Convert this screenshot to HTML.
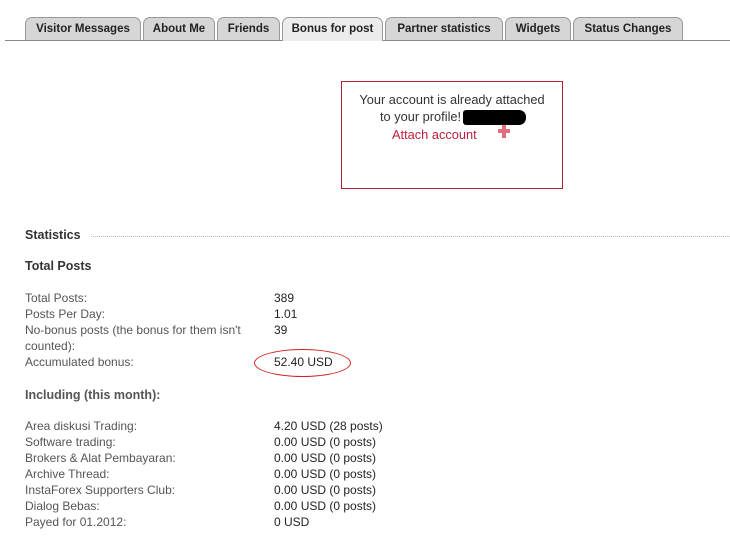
<!DOCTYPE html>
<html><head><meta charset="utf-8"><style>
body{margin:0;width:730px;height:556px;background:#fff;font-family:"Liberation Sans",sans-serif;font-size:12px;color:#333;position:relative;overflow:hidden}
.a{position:absolute;white-space:nowrap;line-height:16px}
.tab{position:absolute;top:17px;height:23px;box-sizing:border-box;border:1px solid #999;border-bottom:none;border-radius:7px 7px 0 0;background:#d6d6d6;font-weight:bold;font-size:11.5px;color:#222;text-align:center;line-height:23px}
.tab.on{background:#ececec;height:24px}
.l{color:#555}
.v{color:#222}
.b{font-size:12.8px}
</style></head><body>
<div style="position:absolute;left:5px;top:40px;width:725px;border-top:1px solid #888"></div>
<div class="tab" style="left:25px;width:116px">Visitor Messages</div>
<div class="tab" style="left:143px;width:72px">About Me</div>
<div class="tab" style="left:217px;width:63px">Friends</div>
<div class="tab on" style="left:282px;width:101px">Bonus for post</div>
<div class="tab" style="left:385px;width:118px">Partner statistics</div>
<div class="tab" style="left:505px;width:66px">Widgets</div>
<div class="tab" style="left:573px;width:110px">Status Changes</div>

<div style="position:absolute;left:341px;top:81px;width:222px;height:108px;border:1px solid #b02030;box-sizing:border-box"></div>
<div class="a b" style="left:341px;width:222px;text-align:center;top:92px;white-space:normal">Your account is already attached</div>
<div class="a b" style="left:380px;top:109px">to your profile!</div>
<div style="position:absolute;left:463px;top:110px;width:63px;height:15px;background:#000;border-radius:3px 7px 7px 3px"></div>
<div class="a b" style="left:392px;top:127px;color:#c0203a">Attach account</div>
<div style="position:absolute;left:502px;top:125px;width:4px;height:13px;background:#e07080"></div>
<div style="position:absolute;left:498px;top:129px;width:12px;height:4px;background:#e07080"></div>

<div class="a" style="left:25px;top:227px;font-weight:bold;font-size:12.5px;color:#333">Statistics</div>
<div style="position:absolute;left:91px;top:236px;width:639px;border-top:1px dotted #bbb"></div>
<div class="a" style="left:25px;top:258px;font-weight:bold;font-size:12.5px;color:#333">Total Posts</div>

<div class="a l" style="left:25px;top:290px">Total Posts:</div><div class="a v" style="left:274px;top:290px">389</div>
<div class="a l" style="left:25px;top:306px">Posts Per Day:</div><div class="a v" style="left:274px;top:306px">1.01</div>
<div class="a l" style="left:25px;top:322px">No-bonus posts (the bonus for them isn't</div><div class="a v" style="left:274px;top:322px">39</div>
<div class="a l" style="left:25px;top:338px">counted):</div>
<div class="a l" style="left:25px;top:354px">Accumulated bonus:</div><div class="a v" style="left:274px;top:354px">52.40 USD</div>
<div style="position:absolute;left:254px;top:349px;width:95px;height:26px;border:1px solid #d02020;border-radius:50%"></div>

<div class="a" style="left:25px;top:387px;font-weight:bold;font-size:12.5px;color:#555">Including (this month):</div>
<div class="a l" style="left:25px;top:418px">Area diskusi Trading:</div><div class="a v" style="left:274px;top:418px">4.20 USD (28 posts)</div>
<div class="a l" style="left:25px;top:434px">Software trading:</div><div class="a v" style="left:274px;top:434px">0.00 USD (0 posts)</div>
<div class="a l" style="left:25px;top:450px">Brokers &amp; Alat Pembayaran:</div><div class="a v" style="left:274px;top:450px">0.00 USD (0 posts)</div>
<div class="a l" style="left:25px;top:466px">Archive Thread:</div><div class="a v" style="left:274px;top:466px">0.00 USD (0 posts)</div>
<div class="a l" style="left:25px;top:482px">InstaForex Supporters Club:</div><div class="a v" style="left:274px;top:482px">0.00 USD (0 posts)</div>
<div class="a l" style="left:25px;top:498px">Dialog Bebas:</div><div class="a v" style="left:274px;top:498px">0.00 USD (0 posts)</div>
<div class="a l" style="left:25px;top:514px">Payed for 01.2012:</div><div class="a v" style="left:274px;top:514px">0 USD</div>
</body></html>
